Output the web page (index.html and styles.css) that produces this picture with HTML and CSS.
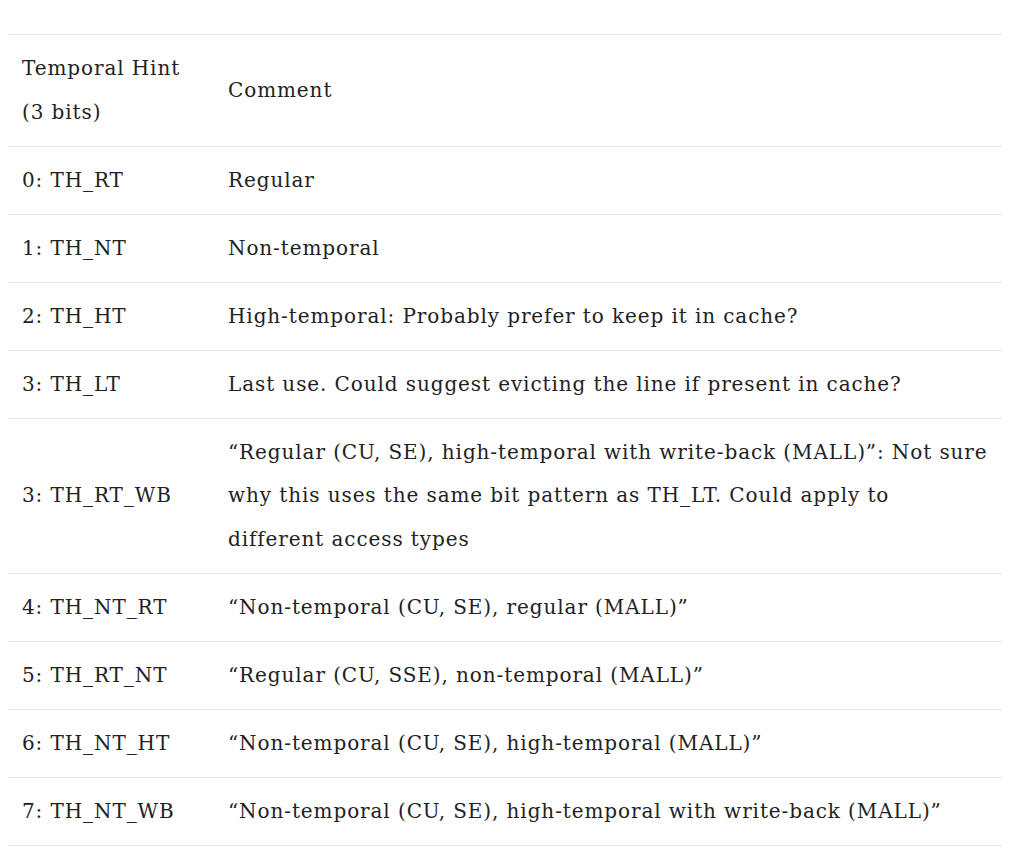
FILE: index.html
```html
<!DOCTYPE html>
<html>
<head>
<meta charset="utf-8">
<link rel="stylesheet" href="styles.css">
</head>
<body>
<div class="wrap">
<table class="hints">
<thead>
<tr><th class="c1">Temporal Hint (3 bits)</th><th class="c2">Comment</th></tr>
</thead>
<tbody>
<tr><td>0: TH_RT</td><td>Regular</td></tr>
<tr><td>1: TH_NT</td><td>Non-temporal</td></tr>
<tr><td>2: TH_HT</td><td>High-temporal: Probably prefer to keep it in cache?</td></tr>
<tr><td>3: TH_LT</td><td>Last use. Could suggest evicting the line if present in cache?</td></tr>
<tr><td>3: TH_RT_WB</td><td>“Regular (CU, SE), high-temporal with write-back (MALL)”: Not sure why this uses the same bit pattern as TH_LT. Could apply to different access types</td></tr>
<tr><td>4: TH_NT_RT</td><td>“Non-temporal (CU, SE), regular (MALL)”</td></tr>
<tr><td>5: TH_RT_NT</td><td>“Regular (CU, SSE), non-temporal (MALL)”</td></tr>
<tr><td>6: TH_NT_HT</td><td>“Non-temporal (CU, SE), high-temporal (MALL)”</td></tr>
<tr><td>7: TH_NT_WB</td><td>“Non-temporal (CU, SE), high-temporal with write-back (MALL)”</td></tr>
</tbody>
</table>
</div>
</body>
</html>
```
FILE: styles.css
```css
html, body { margin: 0; padding: 0; background: #fff; }
body {
  font-family: "DejaVu Serif", "Liberation Serif", serif;
  color: #222222;
}
.wrap { padding: 34px 16px 0 8px; }
.hints {
  width: 994px;
  border-collapse: collapse;
  font-size: 20px;
  letter-spacing: 0.9px;
  line-height: 43.6px;
}
.hints th, .hints td {
  text-align: left;
  font-weight: normal;
  vertical-align: middle;
  padding: 12px 13px 11.4px 14px;
  border-top: 1px solid #e6e6e6;
  border-bottom: 1px solid #e6e6e6;
}
.hints .c1 { width: 179px; }
.hints .c2 { width: auto; }
```
